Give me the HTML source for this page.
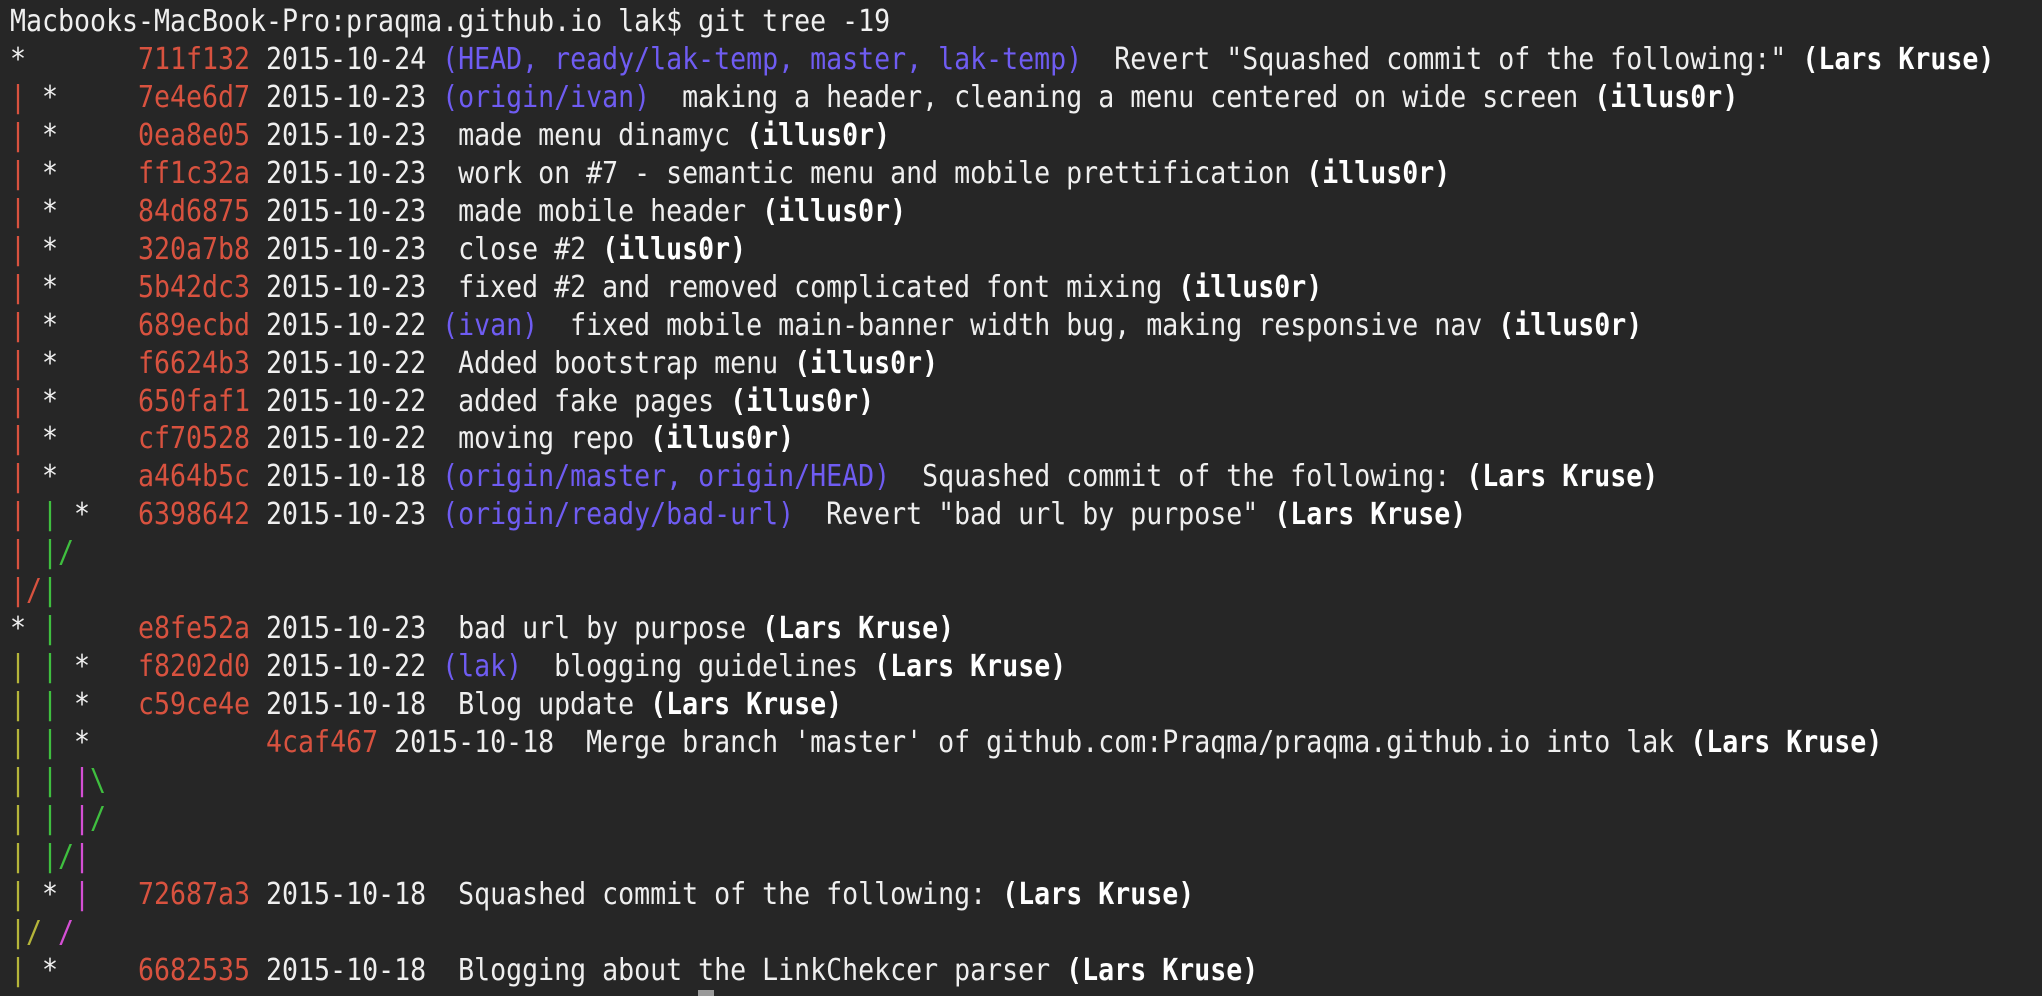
<!DOCTYPE html>
<html><head><meta charset="utf-8"><style>
html,body{margin:0;padding:0;background:#262626;width:2042px;height:996px;overflow:hidden}
pre{margin:0;position:absolute;left:10px;top:3px;font-family:"DejaVu Sans Mono","Liberation Mono",monospace;font-size:30px;line-height:37.96px;color:#efefef;transform:scaleX(0.886);transform-origin:0 0;white-space:pre}
.r{color:#d8523f}.p{color:#6f5cf2}.b{font-weight:bold;color:#fff}
.g{color:#3fbf3f}.y{color:#b5b53a}.m{color:#d44fd4}
#cur{position:absolute;left:698px;top:990px;width:16px;height:6px;background:#9a9a9a}
</style></head><body>
<pre>Macbooks-MacBook-Pro:praqma.github.io lak$ git tree -19
*       <span class="r">711f132</span> 2015-10-24 <span class="p">(HEAD, ready/lak-temp, master, lak-temp)</span>  Revert "Squashed commit of the following:" <span class="b">(Lars Kruse)</span>
<span class="r">|</span> *     <span class="r">7e4e6d7</span> 2015-10-23 <span class="p">(origin/ivan)</span>  making a header, cleaning a menu centered on wide screen <span class="b">(illus0r)</span>
<span class="r">|</span> *     <span class="r">0ea8e05</span> 2015-10-23  made menu dinamyc <span class="b">(illus0r)</span>
<span class="r">|</span> *     <span class="r">ff1c32a</span> 2015-10-23  work on #7 - semantic menu and mobile prettification <span class="b">(illus0r)</span>
<span class="r">|</span> *     <span class="r">84d6875</span> 2015-10-23  made mobile header <span class="b">(illus0r)</span>
<span class="r">|</span> *     <span class="r">320a7b8</span> 2015-10-23  close #2 <span class="b">(illus0r)</span>
<span class="r">|</span> *     <span class="r">5b42dc3</span> 2015-10-23  fixed #2 and removed complicated font mixing <span class="b">(illus0r)</span>
<span class="r">|</span> *     <span class="r">689ecbd</span> 2015-10-22 <span class="p">(ivan)</span>  fixed mobile main-banner width bug, making responsive nav <span class="b">(illus0r)</span>
<span class="r">|</span> *     <span class="r">f6624b3</span> 2015-10-22  Added bootstrap menu <span class="b">(illus0r)</span>
<span class="r">|</span> *     <span class="r">650faf1</span> 2015-10-22  added fake pages <span class="b">(illus0r)</span>
<span class="r">|</span> *     <span class="r">cf70528</span> 2015-10-22  moving repo <span class="b">(illus0r)</span>
<span class="r">|</span> *     <span class="r">a464b5c</span> 2015-10-18 <span class="p">(origin/master, origin/HEAD)</span>  Squashed commit of the following: <span class="b">(Lars Kruse)</span>
<span class="r">|</span> <span class="g">|</span> *   <span class="r">6398642</span> 2015-10-23 <span class="p">(origin/ready/bad-url)</span>  Revert "bad url by purpose" <span class="b">(Lars Kruse)</span>
<span class="r">|</span> <span class="g">|/</span>
<span class="r">|/</span><span class="g">|</span>
* <span class="g">|</span>     <span class="r">e8fe52a</span> 2015-10-23  bad url by purpose <span class="b">(Lars Kruse)</span>
<span class="y">|</span> <span class="g">|</span> *   <span class="r">f8202d0</span> 2015-10-22 <span class="p">(lak)</span>  blogging guidelines <span class="b">(Lars Kruse)</span>
<span class="y">|</span> <span class="g">|</span> *   <span class="r">c59ce4e</span> 2015-10-18  Blog update <span class="b">(Lars Kruse)</span>
<span class="y">|</span> <span class="g">|</span> *           <span class="r">4caf467</span> 2015-10-18  Merge branch 'master' of github.com:Praqma/praqma.github.io into lak <span class="b">(Lars Kruse)</span>
<span class="y">|</span> <span class="g">|</span> <span class="m">|</span><span class="g">\</span>
<span class="y">|</span> <span class="g">|</span> <span class="m">|</span><span class="g">/</span>
<span class="y">|</span> <span class="g">|/</span><span class="m">|</span>
<span class="y">|</span> * <span class="m">|</span>   <span class="r">72687a3</span> 2015-10-18  Squashed commit of the following: <span class="b">(Lars Kruse)</span>
<span class="y">|/</span> <span class="m">/</span>
<span class="y">|</span> *     <span class="r">6682535</span> 2015-10-18  Blogging about the LinkChekcer parser <span class="b">(Lars Kruse)</span></pre>
<div id="cur"></div>
</body></html>
